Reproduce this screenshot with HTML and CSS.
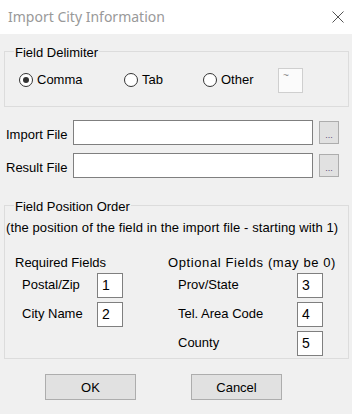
FILE: index.html
```html
<!DOCTYPE html>
<html>
<head>
    <title>Import City Information</title>
    <link rel="stylesheet" href="styles.css">
</head>
<body>
    <div class="dialog">
        <div class="titlebar">
            <span class="title">Import City Information</span>
            <svg class="close" width="12" height="12" viewBox="0 0 12 12">
                <path d="M0.5 0.5 L11.5 11.5 M11.5 0.5 L0.5 11.5" stroke="#555" stroke-width="1" fill="none"/>
            </svg>
        </div>

        <fieldset class="group delim">
            <legend>Field Delimiter</legend>
            <div class="radio-row">
                <label class="radio comma"><span class="dot checked"></span>Comma</label>
                <label class="radio tab"><span class="dot"></span>Tab</label>
                <label class="radio other"><span class="dot"></span>Other</label>
                <div class="other-box">~</div>
            </div>
        </fieldset>

        <div class="files">
            <div class="file-row">
                <label>Import File</label>
                <div class="file-input"></div>
                <div class="browse">...</div>
            </div>
            <div class="file-row">
                <label>Result File</label>
                <div class="file-input"></div>
                <div class="browse">...</div>
            </div>
        </div>

        <fieldset class="group order">
            <legend>Field Position Order</legend>
            <div class="desc">(the position of the field in the import file - starting with 1)</div>
            <div class="columns">
                <div class="col req">
                    <div class="col-head">Required Fields</div>
                    <div class="rows">
                        <div class="field-row"><label>Postal/Zip</label><div class="num">1</div></div>
                        <div class="field-row"><label>City Name</label><div class="num">2</div></div>
                    </div>
                </div>
                <div class="col opt">
                    <div class="col-head">Optional Fields (may be 0)</div>
                    <div class="rows">
                        <div class="field-row"><label>Prov/State</label><div class="num">3</div></div>
                        <div class="field-row"><label>Tel. Area Code</label><div class="num">4</div></div>
                        <div class="field-row"><label>County</label><div class="num">5</div></div>
                    </div>
                </div>
            </div>
        </fieldset>

        <div class="buttons">
            <button>OK</button>
            <button>Cancel</button>
        </div>
    </div>
</body>
</html>
```

FILE: styles.css
```css
body {
    margin: 0;
    background: #f0f0f0;
    font-family: "Liberation Sans", Arial, sans-serif;
    font-size: 13px;
    line-height: 16px;
    color: #000;
}
.dialog {
    width: 352px;
    height: 414px;
}
.titlebar {
    height: 34px;
    background: #fff;
    display: flex;
    align-items: center;
    justify-content: space-between;
    padding: 0 8px;
}
.title {
    font-family: "Noto Sans", "Open Sans", sans-serif;
    font-size: 14px;
    color: #999;
}
.group {
    margin: 8px 3px 0 4px;
    padding: 0;
    border: 1px solid #dcdcdc;
    min-width: 0;
}
.group legend {
    margin-left: 9px;
    padding: 3px 1px 0;
    line-height: 16px;
}
.radio-row {
    display: flex;
    align-items: flex-start;
    padding: 7px 0 13px 14px;
}
.radio {
    display: flex;
    align-items: center;
    gap: 4px;
    margin-top: 4px;
}
.comma { width: 105px; }
.tab { width: 79px; }
.other { width: 75px; }
.dot {
    width: 14px;
    height: 14px;
    box-sizing: border-box;
    border: 1.5px solid #333;
    border-radius: 50%;
    background: #fff;
    display: flex;
    align-items: center;
    justify-content: center;
}
.dot.checked::after {
    content: '';
    width: 6px;
    height: 6px;
    border-radius: 50%;
    background: #333;
}
.other-box {
    width: 25px;
    height: 25px;
    box-sizing: border-box;
    border: 1px solid #cfcfcf;
    background: #fbfbfb;
    font-size: 10px;
    line-height: 10px;
    color: #888;
    padding: 2px 0 0 4px;
}
.files {
    margin-top: 13px;
    display: flex;
    flex-direction: column;
    gap: 8px;
}
.file-row {
    display: flex;
    align-items: flex-start;
    padding-left: 6px;
}
.file-row label {
    width: 67px;
    margin-top: 7px;
}
.file-input {
    width: 240px;
    height: 25px;
    box-sizing: border-box;
    border: 1px solid #7f7f7f;
    background: #fff;
}
.browse {
    margin: 1px 0 0 6px;
    width: 20px;
    height: 23px;
    box-sizing: border-box;
    border: 1px solid #adadad;
    background: #e1e1e1;
    color: #5a4a7a;
    font-size: 9px;
    line-height: 10px;
    text-align: center;
    padding-top: 8px;
}
.order {
    margin-top: 18px;
}
.desc {
    padding: 5px 0 0 1px;
    white-space: nowrap;
    letter-spacing: 0.1px;
}
.columns {
    display: flex;
    margin-top: 19px;
    padding: 0 0 2px 10px;
}
.req { width: 153px; }
.opt .col-head {
    letter-spacing: 0.6px;
    white-space: nowrap;
}
.rows {
    margin-top: 2px;
    display: flex;
    flex-direction: column;
    gap: 4px;
}
.field-row {
    display: flex;
    align-items: flex-start;
}
.field-row label {
    margin-top: 4px;
}
.req .field-row { padding-left: 7px; }
.req .field-row label { width: 75px; }
.opt .field-row { padding-left: 10px; }
.opt .field-row label { width: 119px; }
.num {
    width: 26px;
    height: 25px;
    box-sizing: border-box;
    border: 1px solid #7f7f7f;
    background: #fff;
    padding-left: 4px;
    line-height: 23px;
    font-size: 14px;
}
.buttons {
    display: flex;
    gap: 55px;
    padding-left: 45px;
    margin-top: 15px;
}
button {
    width: 91px;
    height: 26px;
    border: 1px solid #adadad;
    background: #e1e1e1;
    font-family: "Liberation Sans", Arial, sans-serif;
    font-size: 13px;
    color: #000;
    padding: 0;
}
```
